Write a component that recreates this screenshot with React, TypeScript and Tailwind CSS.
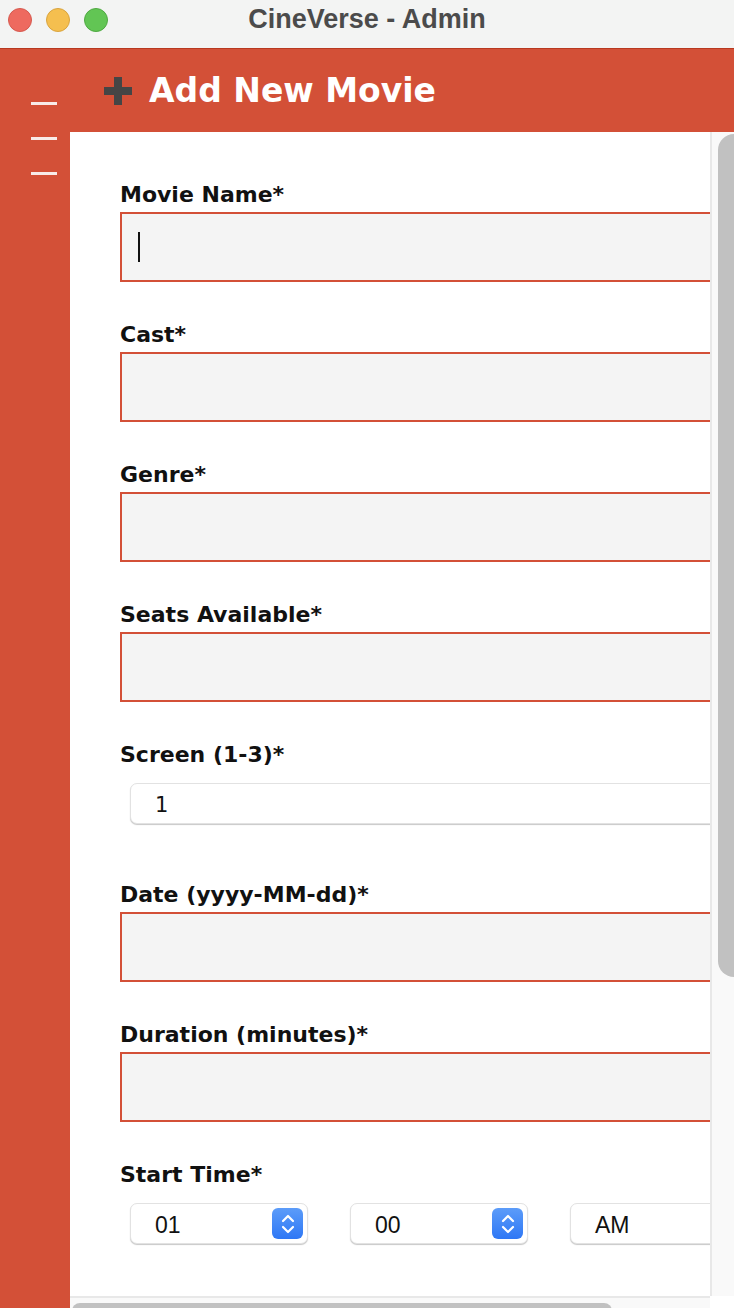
import React from 'react';

const ORANGE = 'bg-[#d35037]';

const fields = ['Movie Name*', 'Cast*', 'Genre*', 'Seats Available*'];

function Label({ text }: { text: string }) {
  return (
    <div className="relative top-[2px] h-[24px] leading-[24px] text-[22px] font-bold text-[#111] font-['DejaVu_Sans',sans-serif] whitespace-nowrap">
      {text}
    </div>
  );
}

function TextField({ label, caret }: { label: string; caret?: boolean }) {
  return (
    <div className="mb-[39px]">
      <Label text={label} />
      <div className="mt-[7px] h-[70px] w-[640px] border-2 border-[#d35037] bg-[#f4f4f4] flex items-center pl-[16px]">
        {caret && <div className="w-[2px] h-[30px] bg-[#111]" />}
      </div>
    </div>
  );
}

function Stepper() {
  return (
    <div className="w-[31px] h-[31px] rounded-[6px] bg-gradient-to-b from-[#5c9cf9] to-[#2e77f5] flex items-center justify-center">
      <svg width="16" height="24" viewBox="0 0 16 24" fill="none" stroke="white" strokeWidth="2.2" strokeLinecap="round" strokeLinejoin="round">
        <path d="M3 9 L8 4 L13 9" />
        <path d="M3 15 L8 20 L13 15" />
      </svg>
    </div>
  );
}

function Combo({ value, width, stepper, font }: { value: string; width: string; stepper?: boolean; font: string }) {
  return (
    <div
      className={`${width} h-[41px] shrink-0 rounded-[7px] bg-white border border-[#e2e2e2] shadow-[0_1px_1px_rgba(0,0,0,0.22)] flex items-center justify-between pl-[24px] pr-[4px]`}
    >
      <span className={`relative top-[2px] text-[#111] ${font}`}>{value}</span>
      {stepper && <Stepper />}
    </div>
  );
}

const TIME_FONT = "text-[23px] font-['Liberation_Sans',Arial,sans-serif]";

export default function App() {
  return (
    <div className="w-[734px] h-[1308px] overflow-hidden flex flex-col bg-white">
      {/* Title bar */}
      <div className="h-[48px] bg-[#f3f4f3] relative flex items-center justify-center shrink-0">
        <div className="absolute left-[8px] top-[8px] flex gap-[14px]">
          <div className="w-[24px] h-[24px] rounded-full bg-[#ee6a5f] border border-[#d65a4f]" />
          <div className="w-[24px] h-[24px] rounded-full bg-[#f5bf4f] border border-[#d9a43f]" />
          <div className="w-[24px] h-[24px] rounded-full bg-[#62c554] border border-[#4fa942]" />
        </div>
        <span className="text-[27px] font-bold text-[#4b4b4b] font-['Liberation_Sans',Arial,sans-serif] leading-none -mt-[9px]">
          CineVerse - Admin
        </span>
      </div>

      <div className="flex-1 flex border-t border-[#b8391f] min-h-0">
        {/* Sidebar */}
        <div className={`w-[70px] shrink-0 ${ORANGE} flex flex-col items-start pl-[31px] pt-[53px] gap-[32px]`}>
          <div className="w-[26px] h-[3px] bg-[#f8ebe8]" />
          <div className="w-[26px] h-[3px] bg-[#f8ebe8]" />
          <div className="w-[26px] h-[3px] bg-[#f8ebe8]" />
        </div>

        <div className="flex-1 flex flex-col min-w-0">
          {/* Header */}
          <div className={`h-[83px] shrink-0 ${ORANGE} flex items-center pl-[34px]`}>
            <svg width="28" height="28" viewBox="0 0 28 28" className="mr-[17px]">
              <rect x="10" y="0" width="8" height="28" fill="#454545" />
              <rect x="0" y="10" width="28" height="8" fill="#454545" />
            </svg>
            <span className="text-[33px] font-bold text-white font-['DejaVu_Sans',sans-serif] leading-none">
              Add New Movie
            </span>
          </div>

          {/* Body */}
          <div className="flex-1 flex min-h-0">
            <div className="w-[640px] flex flex-col min-h-0">
              <div className="flex-1 overflow-hidden pl-[50px] pt-[49px]">
                {fields.map((f, i) => (
                  <TextField key={f} label={f} caret={i === 0} />
                ))}

                <div className="mb-[57px]">
                  <Label text="Screen (1-3)*" />
                  <div className="mt-[18px] ml-[10px]">
                    <Combo value="1" width="w-[620px]" font="text-[21px] font-['DejaVu_Sans',sans-serif]" />
                  </div>
                </div>

                <TextField label="Date (yyyy-MM-dd)*" />
                <TextField label="Duration (minutes)*" />

                <div>
                  <Label text="Start Time*" />
                  <div className="mt-[18px] ml-[10px] flex gap-[42px]">
                    <Combo value="01" width="w-[178px]" stepper font={TIME_FONT} />
                    <Combo value="00" width="w-[178px]" stepper font={TIME_FONT} />
                    <Combo value="AM" width="w-[178px]" font={TIME_FONT} />
                  </div>
                </div>
              </div>
              {/* Horizontal scrollbar */}
              <div className="h-[12px] shrink-0 border-t-2 border-[#e8e8e8] bg-[#f9f9f9] pl-[2px] pt-[5px]">
                <div className="w-[540px] h-[8px] rounded-t-full bg-[#c1c1c1]" />
              </div>
            </div>

            {/* Vertical scrollbar */}
            <div className="w-[24px] shrink-0 flex flex-col">
              <div className="flex-1 border-l-2 border-[#e8e8e8] bg-[#f9f9f9] pl-[6px] pt-[2px]">
                <div className="w-[16px] h-[843px] rounded-l-full bg-[#c1c1c1]" />
              </div>
              <div className="h-[12px] bg-white" />
            </div>
          </div>
        </div>
      </div>
    </div>
  );
}
